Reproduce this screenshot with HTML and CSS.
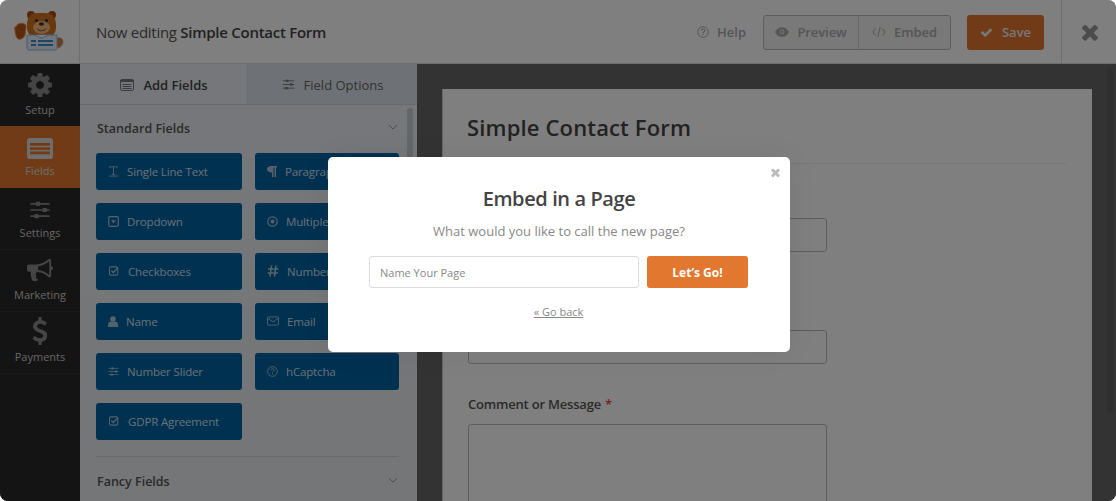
FILE: index.html
```html
<!DOCTYPE html>
<html lang="en">
<head>
<meta charset="utf-8">
<title>Embed in a Page</title>
<link rel="stylesheet" href="styles.css">
</head>
<body>
<svg class="defs" width="0" height="0" aria-hidden="true">
  <symbol id="i-sliders" viewBox="0 0 16 16"><path d="M1 3.500h14M1 8h14M1 12.500h14" fill="none" stroke="currentColor" stroke-width="1.200"/><rect x="5" y="2" width="3" height="3" fill="currentColor"/><rect x="10" y="6.500" width="3" height="3" fill="currentColor"/><rect x="4" y="11" width="3" height="3" fill="currentColor"/></symbol>
  <symbol id="i-check" viewBox="0 0 16 16"><rect x="2" y="2.500" width="11" height="11" rx="2" fill="none" stroke="currentColor" stroke-width="1.400"/><path d="M4.500 7.500l2.500 2.500 6.500-6.500" fill="none" stroke="currentColor" stroke-width="1.800"/></symbol>
</svg>
<div class="app">
  <header class="topbar">
    <div class="logo">
      <svg width="50" height="40" viewBox="0 0 50 40">
        <path d="M43 27c4-1 6 1 6 4s-3 6-6 6z" fill="#d8792d" stroke="#8fb7d6" stroke-width=".8"/>
        <path d="M1 19c-1-3 1-4 2-4 0-2 2-3 3-2 1-1 3-1 4 0 2 0 2 2 2 3l-1 8c-1 3-5 5-7 4-2-2-3-6-3-9z" fill="#b9561c" stroke="#e68a3c"/>
        <circle cx="17" cy="4" r="4" fill="#a94f1a"/><circle cx="38" cy="4" r="4" fill="#a94f1a"/>
        <rect x="13" y="2" width="29" height="25" rx="10" fill="#d0701f"/>
        <ellipse cx="27.500" cy="16.500" rx="8.500" ry="6.500" fill="#f3bd83"/>
        <circle cx="22.500" cy="9.500" r="1.500" fill="#17324f"/><circle cx="32.500" cy="9.500" r="1.500" fill="#17324f"/>
        <ellipse cx="27.500" cy="13" rx="2.700" ry="1.800" fill="#5a2a10"/>
        <path d="M23 17.500c2 3 7 3 9 0" fill="none" stroke="#7a3a12" stroke-width="1"/>
        <path d="M13 24h30v13a2 2 0 0 1-2 2H15a2 2 0 0 1-2-2z" fill="#e2eef8" stroke="#8fb7d6"/>
        <path d="M20 24l7.500 3 7.500-3" fill="#fff" stroke="#8fb7d6"/>
        <rect x="17" y="29" width="5" height="2" fill="#3f8dc4"/><rect x="24" y="29" width="15" height="2" fill="#3f8dc4"/>
        <rect x="17" y="33" width="5" height="2" fill="#3f8dc4"/><rect x="24" y="33" width="15" height="2" fill="#3f8dc4"/>
      </svg>
    </div>
    <div class="title">Now editing <strong>Simple Contact Form</strong></div>
    <div class="actions">
      <a class="help">
        <svg width="12" height="12" viewBox="0 0 12 12"><circle cx="6" cy="6" r="5.300" fill="none" stroke="currentColor"/><path d="M4.300 4.700c0-2.300 3.500-2.300 3.500-.2 0 1.300-1.800 1.300-1.800 2.700M6 8.100v1.200" fill="none" stroke="currentColor" stroke-width="1.100"/></svg>
        Help
      </a>
      <div class="btn-group">
        <a class="group-btn preview">
          <svg width="14" height="10" viewBox="0 0 14 10"><path d="M0 5c3.500-6.500 10.500-6.500 14 0-3.500 6.500-10.500 6.500-14 0z" fill="currentColor"/><circle cx="7" cy="4.800" r="2.400" fill="#f0f0f0"/><circle cx="7" cy="4.800" r="1.500" fill="currentColor"/></svg>
          Preview
        </a>
        <a class="group-btn embed">
          <svg width="14" height="10" viewBox="0 0 14 10"><path d="M3.500 1.500L.8 5l2.700 3.500M10.500 1.500L13.200 5l-2.700 3.500M8.200 0L5.800 10" fill="none" stroke="currentColor"/></svg>
          Embed
        </a>
      </div>
      <a class="save">
        <svg width="13" height="13" viewBox="0 0 1792 1792"><path fill="currentColor" d="M1671 566q0 40-28 68l-724 724-136 136q-28 28-68 28t-68-28l-136-136-362-362q-28-28-28-68t28-68l136-136q28-28 68-28t68 28l294 295 656-657q28-28 68-28t68 28l136 136q28 28 28 68z"/></svg>
        Save
      </a>
    </div>
    <div class="close-cell">
      <svg width="24" height="24" viewBox="0 0 1792 1792"><path fill="currentColor" d="M1490 1322q0 40-28 68l-136 136q-28 28-68 28t-68-28l-294-294-294 294q-28 28-68 28t-68-28l-136-136q-28-28-28-68t28-68l294-294-294-294q-28-28-28-68t28-68l136-136q28-28 68-28t68 28l294 294 294-294q28-28 68-28t68 28l136 136q28 28 28 68t-28 68l-294 294 294 294q28 28 28 68z"/></svg>
    </div>
  </header>

  <div class="main">
    <nav class="sidenav">
      <a class="nav-item">
        <svg width="28" height="28" viewBox="0 0 1792 1792"><path fill="currentColor" d="M1152 896q0-106-75-181t-181-75-181 75-75 181 75 181 181 75 181-75 75-181zm512-109v222q0 12-8 23t-20 13l-185 28q-19 54-39 91 35 50 107 138 10 12 10 25t-9 23q-27 37-99 108t-94 71q-12 0-26-9l-138-108q-44 23-91 38-16 136-29 186-7 28-36 28h-222q-14 0-24.500-8.500t-11.500-21.500l-28-184q-49-16-90-37l-141 107q-10 9-25 9-14 0-25-11-126-114-165-168-7-10-7-23 0-12 8-23 15-21 51-66.500t54-70.500q-27-50-41-99l-183-27q-13-2-21-12.500t-8-23.500v-222q0-12 8-23t19-13l186-28q14-46 39-92-40-57-107-138-10-12-10-24 0-10 9-23 26-36 98.500-107.500t94.500-71.500q13 0 26 10l138 107q44-23 91-38 16-136 29-186 7-28 36-28h222q14 0 24.500 8.500t11.500 21.500l28 184q49 16 90 37l142-107q9-9 24-9 13 0 25 10 129 119 165 170 7 8 7 22 0 12-8 23-15 21-51 66.500t-54 70.500q26 50 41 98l183 28q13 2 21 12.500t8 23.500z"/></svg>
        <span>Setup</span>
      </a>
      <a class="nav-item active">
        <svg width="26" height="21" viewBox="0 0 26 21"><rect x="0" y="0" width="26" height="21" rx="3" fill="currentColor"/><path d="M3 5h20v2.800H3zM3 9.200h20V12H3zM3 13.400h20v2.800H3z" fill="#e27730"/></svg>
        <span>Fields</span>
      </a>
      <a class="nav-item">
        <svg width="24" height="22"><use href="#i-sliders"/></svg>
        <span>Settings</span>
      </a>
      <a class="nav-item">
        <svg width="28" height="26" viewBox="0 0 1792 1792"><path fill="currentColor" d="M1664 640q53 0 90.500 37.500t37.500 90.500-37.500 90.500-90.500 37.500v384q0 52-38 90t-90 38q-417-347-812-380-58 19-91 66t-31 100.500 40 92.500q-20 33-23 65.500t6 58 33.500 55 48 50 61.500 50.500q-29 58-111.500 83t-168.500 11.500-132-55.500q-7-23-29.500-87.500t-32-94.500-23-89-15-101 3.500-98.500 22-110.500h-122q-66 0-113-47t-47-113v-192q0-66 47-113t113-47h480q435 0 896-384 52 0 90 38t38 90v384zm-128 604v-954q-394 302-768 343v270q377 42 768 341z"/></svg>
        <span>Marketing</span>
      </a>
      <a class="nav-item">
        <svg width="28" height="28" viewBox="300 0 1200 1792"><path fill="currentColor" d="M1362 1185q0 153-99.500 263.500t-258.500 136.500v175q0 14-9 23t-23 9h-135q-13 0-22.500-9.500t-9.500-22.500v-175q-66-9-127.500-31t-101.500-44.500-74-48-46.500-37.500-17.500-18q-17-21-2-41l103-135q7-10 23-12 15-2 24 9l2 2q113 99 243 125 37 8 74 8 81 0 142.500-43t61.500-122q0-28-15-53t-33.500-42-58.500-37.500-66-32-80-32.500q-39-16-61.500-25t-61.500-26.500-62.500-31-56.500-35.500-53.500-42.500-43.500-49-35.500-58-21-66.500-8.500-78q0-138 98-242t255-134v-180q0-13 9.500-22.500t22.500-9.500h135q14 0 23 9t9 23v176q57 6 110.500 23t87 33.500 63.500 37.500 39 29 15 14q17 18 5 38l-81 146q-8 15-23 16-14 3-27-7-3-3-14.500-12t-39-26.500-58.500-32-74.500-26-85.500-11.500q-95 0-155 43t-60 111q0 26 8.500 48t29.500 41.500 39.500 33 56 31 60.500 27 70 27.500q53 20 81 31.500t76 35 75.500 42.500 62 50 53 63.500 31.500 76.500 13 94z"/></svg>
        <span>Payments</span>
      </a>
    </nav>

    <aside class="panel">
      <div class="tabs">
        <a class="tab current">
          <svg width="14" height="12" viewBox="0 0 14 12"><rect x=".5" y=".5" width="13" height="11" rx="1.500" fill="none" stroke="currentColor"/><path d="M.5 1h13v2H.5zM2.500 5h9v1h-9zM2.500 7h9v1h-9zM2.500 9h9v1h-9z" fill="currentColor"/></svg>
          Add Fields
        </a>
        <a class="tab">
          <svg width="13" height="13"><use href="#i-sliders"/></svg>
          Field Options
        </a>
      </div>
      <div class="panel-body">
        <div class="scroll-thumb"></div>
        <div class="section-head">
          <span>Standard Fields</span>
          <svg width="10" height="6" viewBox="0 0 12 7"><path d="M1 1l5 5 5-5" fill="none" stroke="currentColor" stroke-width="1.200"/></svg>
        </div>
        <div class="field-grid">
          <a class="field"><svg width="11" height="12" viewBox="0 0 13 13"><path d="M2 3V1.500h9V3M6.500 1.500v9M4.500 10.500h4M1 12.500h11" fill="none" stroke="currentColor"/></svg>Single Line Text</a>
          <a class="field"><svg width="10" height="11" viewBox="0 0 10 11"><path d="M4 0h6v1.500H9V11H7.500V1.500H6.500V11H5V6.500C1.500 6.500 0 5 0 3.300S1.500 0 4 0z" fill="currentColor"/></svg>Paragraph Text</a>
          <a class="field"><svg width="11" height="11" viewBox="0 0 11 11"><rect x=".7" y=".7" width="9.600" height="9.600" rx="1.500" fill="none" stroke="currentColor" stroke-width="1.200"/><path d="M3 4.300h5L5.500 7.300z" fill="currentColor"/></svg>Dropdown</a>
          <a class="field"><svg width="11" height="11" viewBox="0 0 11 11"><circle cx="5.500" cy="5.500" r="4.700" fill="none" stroke="currentColor" stroke-width="1.200"/><circle cx="5.500" cy="5.500" r="2" fill="currentColor"/></svg>Multiple Choice</a>
          <a class="field"><svg width="12" height="12"><use href="#i-check"/></svg>Checkboxes</a>
          <a class="field"><svg width="12" height="12" viewBox="0 0 12 12"><path d="M4.500 .5L3 11.500M9 .5L7.500 11.500M1 4h10.500M.5 8H11" fill="none" stroke="currentColor" stroke-width="1.600"/></svg>Numbers</a>
          <a class="field"><svg width="10" height="11" viewBox="0 0 10 11"><circle cx="5" cy="3" r="2.800" fill="currentColor"/><path d="M0 11V8.500C0 6.500 1.500 5.500 3 5.500h4c1.500 0 3 1 3 3V11z" fill="currentColor"/></svg>Name</a>
          <a class="field"><svg width="12" height="10" viewBox="0 0 13 11"><rect x=".5" y="1" width="12" height="9" rx="1" fill="none" stroke="currentColor"/><path d="M.8 2.500L6.500 6.500l5.700-4" fill="none" stroke="currentColor"/></svg>Email</a>
          <a class="field"><svg width="11" height="11"><use href="#i-sliders"/></svg>Number Slider</a>
          <a class="field"><svg width="11" height="11" viewBox="0 0 12 12"><circle cx="6" cy="6" r="5.300" fill="none" stroke="currentColor"/><path d="M4.300 4.700c0-2.300 3.500-2.300 3.500-.2 0 1.300-1.800 1.300-1.800 2.700M6 8.100v1.200" fill="none" stroke="currentColor"/></svg>hCaptcha</a>
          <a class="field"><svg width="12" height="12"><use href="#i-check"/></svg>GDPR Agreement</a>
        </div>
        <div class="section-head fancy">
          <span>Fancy Fields</span>
          <svg width="10" height="6" viewBox="0 0 12 7"><path d="M1 1l5 5 5-5" fill="none" stroke="currentColor" stroke-width="1.200"/></svg>
        </div>
      </div>
    </aside>

    <section class="canvas">
      <div class="form-card">
        <h1 class="form-title">Simple Contact Form</h1>
        <div class="form-input first"></div>
        <div class="form-input second"></div>
        <label class="form-label">Comment or Message <em>*</em></label>
        <div class="form-input area"></div>
      </div>
      <div class="canvas-scroll"></div>
    </section>
  </div>

  <div class="overlay"></div>
  <div class="modal">
    <a class="modal-close">
      <svg width="13" height="13" viewBox="0 0 1792 1792"><path fill="currentColor" d="M1490 1322q0 40-28 68l-136 136q-28 28-68 28t-68-28l-294-294-294 294q-28 28-68 28t-68-28l-136-136q-28-28-28-68t28-68l294-294-294-294q-28-28-28-68t28-68l136-136q28-28 68-28t68 28l294 294 294-294q28-28 68-28t68 28l136 136q28 28 28 68t-28 68l-294 294 294 294q28 28 28 68z"/></svg>
    </a>
    <h2 class="modal-title">Embed in a Page</h2>
    <p class="modal-text">What would you like to call the new page?</p>
    <div class="modal-row">
      <input class="modal-input" type="text" placeholder="Name Your Page">
      <button class="modal-go" type="button">Let’s Go!</button>
    </div>
    <a class="modal-back">« Go back</a>
  </div>
</div>
</body>
</html>
```
FILE: styles.css
```css
* { box-sizing: border-box; }
html, body { margin: 0; height: 100%; background: #fff; }
body { font-family: "Open Sans", "Noto Sans", sans-serif; overflow: hidden; }
a { display: flex; align-items: center; color: inherit; text-decoration: none; }
.defs { display: block; height: 0; }

.app { position: relative; height: 501px; border-radius: 8px; overflow: hidden; display: flex; flex-direction: column; background: #666; }

.topbar { height: 64px; flex: none; display: flex; align-items: center; background: #fff; border-bottom: 1px solid #ddd; }
.logo { width: 80px; height: 100%; flex: none; display: flex; align-items: center; justify-content: center; border-right: 1px solid #ddd; padding-right: 1px; padding-bottom: 1px; }
.title { margin-left: 16px; font-size: 15px; color: #555; letter-spacing: -.27px; }
.title strong { font-weight: 600; color: #444; }
.actions { margin-left: auto; display: flex; align-items: center; height: 100%; padding: 1px 17px 0 0; }
.help { gap: 8px; font-size: 13px; color: #aaa; margin-right: 17px; font-weight: 600; }
.btn-group { display: flex; height: 35px; border: 1px solid #bbb; border-radius: 3px; background: #f2f2f2; font-size: 13px; font-weight: 600; color: #aaa; margin-right: 16px; letter-spacing: -.1px; }
.group-btn { gap: 8px; justify-content: center; }
.preview { width: 95px; border-right: 1px solid #d0d0d0; }
.embed { width: 91px; }
.save { width: 77px; height: 35px; justify-content: center; gap: 9px; background: #e27730; border-radius: 3px; color: #eee; font-size: 13px; font-weight: 600; }
.close-cell { width: 55px; height: 100%; flex: none; display: flex; align-items: center; justify-content: center; border-left: 1px solid #ddd; color: #999; padding-left: 1px; }

.main { flex: 1; display: flex; min-height: 0; }

.sidenav { width: 80px; flex: none; background: #282828; color: #aaa; }
.nav-item { height: 62px; flex-direction: column; justify-content: flex-end; padding-bottom: 9px; gap: 4px; font-size: 11px; border-bottom: 1px solid #333; color: #ccc; }
.nav-item:first-child { padding-bottom: 8px; gap: 3px; border-bottom-color: transparent; }
.nav-item svg { color: #8a8a8a; }
.nav-item.active { background: #e27730; color: #ddd; border-bottom-color: transparent; }
.nav-item.active svg { color: #ddd; }

.panel { width: 337px; flex: none; display: flex; flex-direction: column; background: #eaeff4; min-height: 0; }
.tabs { height: 41px; flex: none; display: flex; border-bottom: 1px solid #ccd3da; }
.tab { flex: 1; justify-content: center; gap: 9px; font-size: 13px; color: #666; background: #dde4ec; padding-top: 1px; }
.tab.current { width: 168px; flex: none; background: #eaeff4; font-weight: 600; color: #444; border-right: 1px solid #d5dce3; padding-left: 1px; }
.tab svg { color: #777; }
.panel-body { position: relative; flex: 1; padding: 0 18px 0 16px; min-height: 0; overflow: hidden; background: linear-gradient(#eaeff4, #e9ecef); }
.scroll-thumb { position: absolute; right: 4px; top: 3px; width: 6px; height: 140px; border-radius: 3px; background: #c8ced4; }
.section-head { height: 48px; display: flex; align-items: center; justify-content: space-between; font-size: 12.500px; font-weight: 600; color: #555; padding: 0 0 2px 1px; }
.section-head svg { color: #999; margin: -2px 1px 0 0; }
.field-grid { display: grid; grid-template-columns: 146px 144px; column-gap: 13px; row-gap: 13.400px; padding-bottom: 16px; border-bottom: 1px solid #ccd3da; }
.field { height: 36.600px; gap: 8px; padding-left: 12px; border-radius: 3px; background: #0262a2; color: #cfe0ec; font-size: 11.500px; letter-spacing: -.15px; white-space: nowrap; overflow: hidden; }
.field svg { flex: none; color: #a9c4d8; }
.fancy { height: 50px; padding-bottom: 1px; }

.canvas { flex: 1; position: relative; min-width: 0; padding: 25px 24px 0 25px; background: #666; }
.form-card { height: 100%; background: #fff; border-left: 1px solid #ccc; padding: 0 26px 0 24px; }
.canvas-scroll { position: absolute; right: 3px; top: 4px; width: 6px; height: 345px; border-radius: 3px; background: #5c5c5c; }
.form-title { margin: 0; height: 75px; padding-top: 21px; font-size: 22px; line-height: 34px; font-weight: 600; letter-spacing: .15px; color: #444; border-bottom: 1px solid #eee; }
.form-label { display: block; margin: 30px 0 10px 1px; font-size: 13px; line-height: 20px; font-weight: 600; color: #555; letter-spacing: -.2px; }
.form-label em { font-style: normal; color: #e04a3a; margin-left: 1px; }
.form-input { width: 359px; height: 34px; border: 1px solid #bbb; border-radius: 3px; background: #fff; margin-left: 1px; }
.form-input.first { margin-top: 54px; }
.form-input.second { margin-top: 78px; }
.form-input.area { height: 140px; }

.overlay { position: absolute; inset: 0; background: rgba(0, 0, 0, .5); }
.modal { position: absolute; left: 328px; top: 157px; width: 462px; height: 195px; background: #fff; border-radius: 5px; box-shadow: 0 0 30px rgba(0, 0, 0, .06); display: flex; flex-direction: column; align-items: center; padding-top: 27px; }
.modal-close { position: absolute; right: 8px; top: 9px; color: #bbb; }
.modal-title { margin: 0; font-size: 20px; line-height: 30px; font-weight: 600; color: #444; letter-spacing: -.4px; }
.modal-text { margin: 7px 0 0; font-size: 13px; line-height: 20px; color: #888; }
.modal-row { display: flex; gap: 8px; margin: 15px 1px 0 0; }
.modal-input { width: 270px; height: 32px; padding: 0 10px; border: 1px solid #ddd; border-radius: 3px; font: 11px "Open Sans", sans-serif; color: #888; outline: 0; }
.modal-input::placeholder { color: #888; opacity: 1; }
.modal-go { width: 101px; height: 32px; border: 0; border-radius: 3px; background: #e27730; color: #fff; font: 700 12px "Open Sans", sans-serif; }
.modal-back { margin: 15px 1px 0 0; font-size: 11px; line-height: 18px; color: #888; text-decoration: underline; }
```
